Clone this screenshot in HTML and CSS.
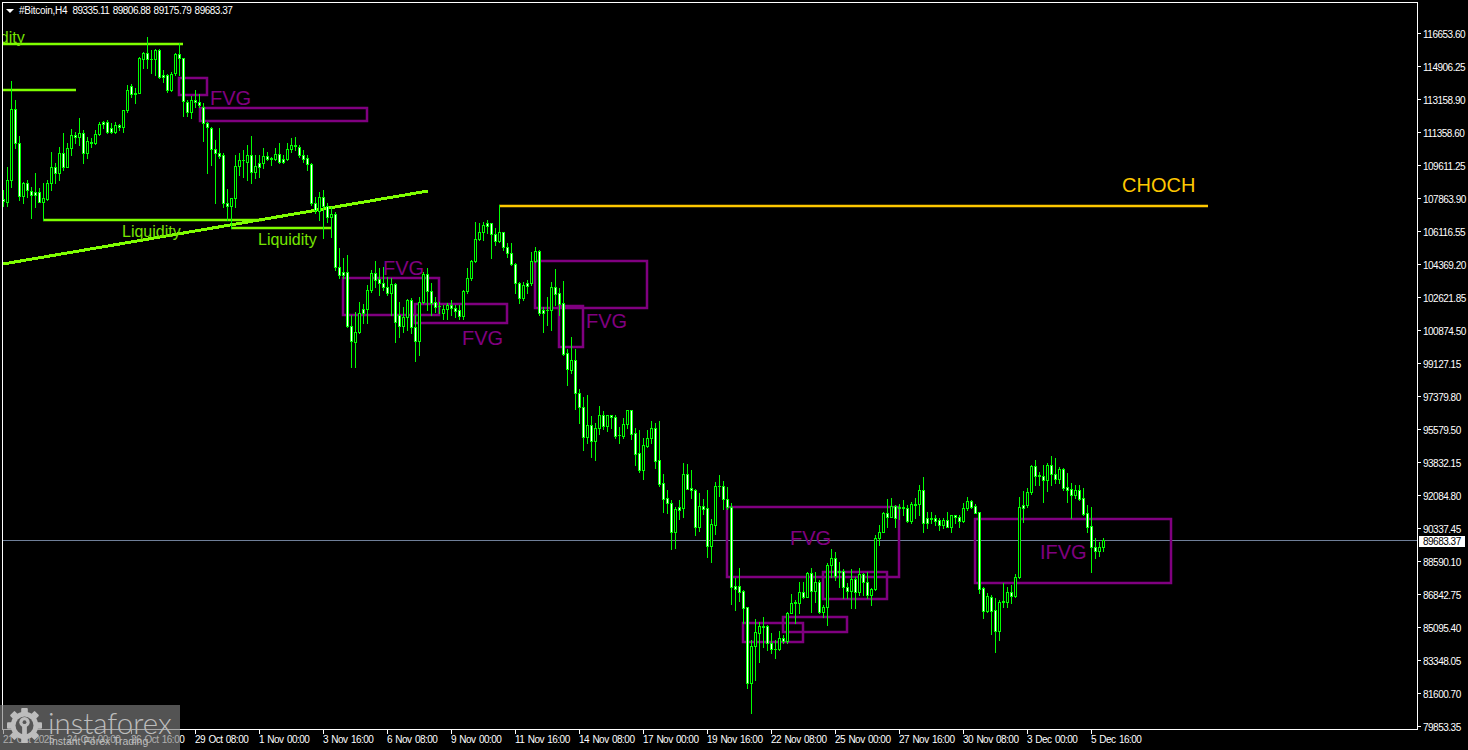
FILE: index.html
```html
<!DOCTYPE html>
<html lang="en">
<head>
<meta charset="utf-8">
<title>#Bitcoin,H4</title>
<link rel="stylesheet" href="styles.css">
</head>
<body>
<main class="terminal">
  <div class="top-row">
    <section class="chart">
      <svg class="plot" id="plot" width="1414" height="726" viewBox="3 3 1414 726" xmlns="http://www.w3.org/2000/svg">
        <g class="objects">
          <line class="price-line" x1="3" y1="540.5" x2="1417" y2="540.5"/>
          <g class="boxes">
            <rect x="179" y="78" width="28" height="17"/>
            <rect x="200" y="108" width="167" height="13"/>
            <rect x="343" y="278" width="96" height="37"/>
            <rect x="415" y="304" width="92" height="19"/>
            <rect x="535" y="261" width="112" height="47"/>
            <rect x="559" y="306" width="24" height="41"/>
            <rect x="727" y="507" width="172" height="70"/>
            <rect x="823" y="572" width="64" height="27"/>
            <rect x="783" y="617" width="64" height="15"/>
            <rect x="743" y="623" width="60" height="19"/>
            <rect x="975" y="519" width="196" height="64"/>
          </g>
          <g class="lime-lines">
            <line x1="3" y1="44" x2="183" y2="44"/>
            <line x1="3" y1="90" x2="76" y2="90"/>
            <line x1="43" y1="220" x2="262" y2="220"/>
            <line x1="231" y1="228" x2="332" y2="228"/>
            <line class="trend" x1="3" y1="264" x2="428" y2="191"/>
          </g>
          <line class="choch-line" x1="499" y1="206" x2="1208" y2="206"/>
        </g>
        <g id="candles"></g>
        <g class="labels">
          <text class="lime" x="-34" y="43">Liquidity</text>
          <text class="lime" x="122" y="237">Liquidity</text>
          <text class="lime" x="258" y="245">Liquidity</text>
          <text class="purple" x="210" y="105">FVG</text>
          <text class="purple" x="383" y="275">FVG</text>
          <text class="purple" x="462" y="345">FVG</text>
          <text class="purple" x="586" y="328">FVG</text>
          <text class="purple" x="790" y="545">FVG</text>
          <text class="purple" x="1040" y="559">IFVG</text>
          <text class="gold" x="1122" y="192">CHOCH</text>
        </g>
      </svg>
      <div class="chart-title">
        <span class="caret"></span>
        <span class="symbol">#Bitcoin,H4</span>
        <span class="ohlc">89335.11 89806.88 89175.79 89683.37</span>
      </div>
    </section>
    <aside class="price-axis">
      <div class="price-row"><i></i><span>116653.60</span></div>
      <div class="price-row"><i></i><span>114906.25</span></div>
      <div class="price-row"><i></i><span>113158.90</span></div>
      <div class="price-row"><i></i><span>111358.60</span></div>
      <div class="price-row"><i></i><span>109611.25</span></div>
      <div class="price-row"><i></i><span>107863.90</span></div>
      <div class="price-row"><i></i><span>106116.55</span></div>
      <div class="price-row"><i></i><span>104369.20</span></div>
      <div class="price-row"><i></i><span>102621.85</span></div>
      <div class="price-row"><i></i><span>100874.50</span></div>
      <div class="price-row"><i></i><span>99127.15</span></div>
      <div class="price-row"><i></i><span>97379.80</span></div>
      <div class="price-row"><i></i><span>95579.50</span></div>
      <div class="price-row"><i></i><span>93832.15</span></div>
      <div class="price-row"><i></i><span>92084.80</span></div>
      <div class="price-row"><i></i><span>90337.45</span></div>
      <div class="price-row"><i></i><span>88590.10</span></div>
      <div class="price-row"><i></i><span>86842.75</span></div>
      <div class="price-row"><i></i><span>85095.40</span></div>
      <div class="price-row"><i></i><span>83348.05</span></div>
      <div class="price-row"><i></i><span>81600.70</span></div>
      <div class="price-row"><i></i><span>79853.35</span></div>
      <div class="last-price">89683.37</div>
    </aside>
  </div>
  <nav class="time-axis">
    <div class="time-cell"><span>21 Oct 2025</span></div>
    <div class="time-cell"><span>24 Oct 00:00</span></div>
    <div class="time-cell"><span>26 Oct 16:00</span></div>
    <div class="time-cell"><span>29 Oct 08:00</span></div>
    <div class="time-cell"><span>1 Nov 00:00</span></div>
    <div class="time-cell"><span>3 Nov 16:00</span></div>
    <div class="time-cell"><span>6 Nov 08:00</span></div>
    <div class="time-cell"><span>9 Nov 00:00</span></div>
    <div class="time-cell"><span>11 Nov 16:00</span></div>
    <div class="time-cell"><span>14 Nov 08:00</span></div>
    <div class="time-cell"><span>17 Nov 00:00</span></div>
    <div class="time-cell"><span>19 Nov 16:00</span></div>
    <div class="time-cell"><span>22 Nov 08:00</span></div>
    <div class="time-cell"><span>25 Nov 00:00</span></div>
    <div class="time-cell"><span>27 Nov 16:00</span></div>
    <div class="time-cell"><span>30 Nov 08:00</span></div>
    <div class="time-cell"><span>3 Dec 00:00</span></div>
    <div class="time-cell"><span>5 Dec 16:00</span></div>
  </nav>
  <div class="watermark">
    <svg class="gear" width="35" height="35" viewBox="0 0 37 37" xmlns="http://www.w3.org/2000/svg">
      <g class="gear-teeth">
        <rect x="15" y="0" width="7" height="37" rx="1"/>
        <rect x="15" y="0" width="7" height="37" rx="1" transform="rotate(45 18.5 18.5)"/>
        <rect x="15" y="0" width="7" height="37" rx="1" transform="rotate(90 18.5 18.5)"/>
        <rect x="15" y="0" width="7" height="37" rx="1" transform="rotate(135 18.5 18.5)"/>
        <circle cx="18.5" cy="18.5" r="14.5"/>
      </g>
      <circle class="gear-hole" cx="18.5" cy="18.5" r="9.5"/>
      <circle class="gear-head" cx="18.5" cy="15" r="5.5"/>
      <circle class="gear-hole" cx="18.5" cy="15" r="2"/>
      <path class="gear-head" d="M16 19h5v15h-5z"/>
    </svg>
    <div class="brand">
      <div class="brand-name">instaforex</div>
      <div class="brand-tag">Instant Forex Trading</div>
    </div>
  </div>
</main>
<script src="chart.js"></script>
</body>
</html>
```
FILE: styles.css
```css
* { box-sizing: border-box; }
html, body { margin: 0; padding: 0; background: #000; }
body { width: 1468px; height: 750px; overflow: hidden; }

.terminal {
  position: relative;
  width: 1468px;
  height: 750px;
  padding: 2px 0 0 2px;
  background: #000;
  color: #fff;
  font-family: "Liberation Sans", Arial, sans-serif;
  font-size: 10px;
  letter-spacing: -0.5px;
}

.top-row { display: flex; height: 728px; }

.chart {
  position: relative;
  flex: 0 0 1416px;
  height: 728px;
  border: 1px solid #fff;
  overflow: hidden;
}
.plot { display: block; }

.chart-title {
  position: absolute;
  left: 3px;
  top: 1px;
  display: flex;
  align-items: center;
  height: 14px;
  white-space: pre;
  line-height: 14px;
  word-spacing: 1px;
}
.caret {
  width: 0;
  height: 0;
  border-left: 4px solid transparent;
  border-right: 4px solid transparent;
  border-top: 4px solid #fff;
  margin-right: 5px;
}
.symbol { margin-right: 5px; letter-spacing: -0.25px; }

.price-line { stroke: #6f7f99; stroke-width: 1; shape-rendering: crispEdges; }
.boxes rect { fill: none; stroke: #800080; stroke-width: 2.5; }
.lime-lines line { stroke: #7fff00; stroke-width: 2.5; }
.lime-lines .trend { stroke-width: 3; shape-rendering: crispEdges; }
.choch-line { stroke: #ffc800; stroke-width: 2.5; }

.labels text { font-family: "Liberation Sans", Arial, sans-serif; letter-spacing: 0; }
.labels .lime { fill: #76e600; font-size: 16px; }
.labels .purple { fill: #800080; font-size: 20px; }
.labels .gold { fill: #ffc800; font-size: 20px; }

.wick { stroke: #00ff00; stroke-width: 1; shape-rendering: crispEdges; }
.body-outline { fill: #00ff00; shape-rendering: crispEdges; }
.body-white { fill: #fff; shape-rendering: crispEdges; }
.body-black { fill: #000; shape-rendering: crispEdges; }

.price-axis {
  position: relative;
  flex: 0 0 50px;
  padding-top: 15px;
}
.price-row {
  display: flex;
  align-items: center;
  height: 33px;
}
.price-row i {
  flex: 0 0 3px;
  height: 1px;
  background: #fff;
  margin-right: 2px;
}
.price-row span { margin-top: 2px; }
.last-price {
  position: absolute;
  left: 1px;
  top: 534px;
  width: 46px;
  height: 11px;
  background: #fff;
  color: #000;
  line-height: 11px;
  padding-left: 4px;
}

.time-axis {
  display: flex;
  padding-left: 1px;
}
.time-cell {
  flex: 0 0 64px;
  position: relative;
  height: 18px;
  padding-top: 4px;
  line-height: 12px;
  white-space: nowrap;
  word-spacing: 1px;
}
.time-cell::before {
  content: "";
  position: absolute;
  left: 0;
  top: 0;
  width: 1px;
  height: 4px;
  background: #fff;
}

.watermark {
  position: absolute;
  left: 0;
  bottom: 0;
  width: 180px;
  height: 45px;
  display: flex;
  align-items: flex-start;
  padding: 3px 0 0 7px;
  background: rgba(128, 128, 128, 0.65);
  letter-spacing: 0;
}
.gear { flex: 0 0 35px; }
.gear-teeth, .gear-head { fill: #bdbdbd; }
.gear-hole { fill: #565656; }
.brand { margin: 1px 0 0 6px; color: #bdbdbd; }
.brand-name {
  font-family: Lato, "Open Sans", sans-serif;
  font-weight: 300;
  font-size: 29.4px;
  line-height: 27px;
  white-space: nowrap;
}
.brand-tag {
  font-family: "Liberation Sans", Arial, sans-serif;
  font-size: 10.5px;
  line-height: 10px;
  margin: 0 0 0 1px;
  white-space: nowrap;
}
```
FILE: chart.js
```js
// Each candle: [high, bodyTop, bodyBottom, low, whiteBody]; pixels on the chart, one every 4px from x=3.
var CANDLES = [
[190,199,201,206,1],[167,180,202,206,0],[81,109,180,187,0],[100,109,143,148,1],[136,143,196,200,1],
[182,183,196,203,0],[180,183,190,197,1],[187,191,195,218,1],[173,192,195,207,1],[188,192,202,202,1],
[183,198,202,220,0],[180,183,199,200,0],[152,167,183,190,0],[163,167,173,183,1],[147,153,173,180,0],
[133,153,167,170,1],[143,148,167,167,0],[129,135,148,155,0],[132,135,137,143,1],[118,133,137,145,0],
[130,133,153,163,1],[137,141,153,158,0],[138,142,143,147,1],[130,134,143,144,0],[122,124,134,135,0],
[121,122,124,128,1],[120,122,132,133,1],[123,128,132,133,1],[122,125,132,133,0],[124,125,127,130,1],
[110,110,127,132,0],[85,90,110,112,0],[84,86,94,97,1],[88,93,94,103,1],[57,58,93,93,0],
[52,53,59,68,0],[37,53,59,68,1],[50,59,59,73,1],[49,50,59,75,0],[49,50,77,78,1],
[70,75,77,82,1],[74,75,90,92,1],[72,74,90,91,0],[53,54,73,75,0],[43,54,58,75,1],
[58,58,101,116,1],[100,102,112,116,1],[96,100,112,118,0],[90,100,102,107,1],[94,102,105,107,1],
[103,107,123,141,1],[122,123,127,173,1],[127,128,149,165,1],[140,149,153,203,1],[128,153,156,158,1],
[153,155,203,207,1],[189,203,206,220,1],[198,198,206,228,0],[155,166,198,207,0],[153,160,166,175,0],
[150,160,160,177,1],[145,155,162,180,0],[136,155,172,183,1],[155,166,172,178,0],[155,163,167,177,1],
[148,156,163,168,0],[152,156,159,160,1],[157,158,159,165,1],[148,154,159,160,0],[143,154,162,163,1],
[155,159,162,163,1],[143,149,159,160,0],[138,145,149,152,0],[137,145,146,150,1],[145,147,155,157,1],
[150,155,159,162,1],[155,158,164,170,1],[163,164,203,205,1],[197,203,210,213,1],[192,197,211,220,0],
[190,197,206,238,1],[203,206,217,222,1],[207,214,217,237,0],[212,214,267,270,1],[248,267,275,278,1],
[258,272,275,278,1],[255,272,326,327,1],[315,326,341,367,1],[312,332,342,367,0],[302,313,332,333,0],
[304,309,313,323,1],[285,290,309,323,0],[270,273,290,292,0],[261,273,280,287,1],[268,279,283,295,1],
[267,283,287,290,1],[277,287,293,295,1],[278,284,293,315,0],[283,284,322,342,1],[302,315,326,337,1],
[307,317,326,332,0],[299,300,317,330,0],[298,300,327,333,1],[315,327,341,361,1],[297,302,341,355,0],
[272,274,302,303,0],[268,274,291,310,1],[283,291,303,315,1],[297,302,307,312,1],[302,306,306,313,1],
[305,309,313,319,0],[303,305,309,319,0],[300,305,308,315,1],[305,308,311,317,1],[305,310,316,319,1],
[290,291,316,319,0],[268,278,291,293,0],[260,261,278,280,0],[222,239,261,262,0],[223,232,239,240,0],
[222,225,232,240,0],[220,223,226,233,1],[223,223,234,258,1],[228,234,241,245,1],[205,232,241,242,0],
[232,232,247,250,1],[243,247,253,257,1],[243,253,264,265,1],[263,264,283,293,1],[282,283,298,303,1],
[282,285,298,300,0],[280,283,286,293,1],[252,261,283,285,0],[247,251,261,262,0],[250,251,313,315,1],
[307,310,313,332,1],[297,310,310,325,1],[282,287,310,330,0],[269,287,294,305,1],[288,293,304,315,1],
[281,303,354,355,1],[349,353,369,385,1],[337,360,370,373,0],[349,360,393,409,1],[389,393,407,423,1],
[397,407,437,450,1],[395,425,437,443,0],[416,425,441,457,1],[423,428,441,460,0],[406,415,428,434,0],
[411,415,426,429,1],[415,415,426,431,0],[415,415,417,428,1],[415,417,436,438,1],[427,435,435,443,1],
[418,424,436,438,0],[410,410,424,428,0],[410,410,434,439,1],[428,433,454,465,1],[430,453,470,472,1],
[438,445,470,479,0],[430,438,446,447,0],[421,428,438,443,0],[423,428,461,468,1],[421,460,484,486,1],
[474,483,499,512,1],[490,498,503,513,1],[500,503,532,549,1],[507,509,532,548,0],[500,507,510,519,1],
[463,474,508,517,0],[464,474,489,489,1],[470,488,490,498,1],[489,490,527,535,1],[493,506,527,531,0],
[499,506,509,514,1],[490,508,546,557,1],[519,524,546,562,0],[482,486,525,534,0],[475,486,486,496,1],
[481,486,499,509,1],[487,499,507,509,1],[503,507,587,604,1],[578,586,589,610,1],[568,586,592,601,1],
[590,591,608,623,1],[607,607,683,688,1],[640,646,683,713,0],[619,632,646,680,0],[622,626,633,662,0],
[617,626,627,647,1],[625,626,643,650,1],[633,643,649,653,1],[640,649,649,658,1],[631,638,649,650,0],
[635,638,641,643,1],[612,613,641,643,0],[594,603,613,613,0],[600,602,603,623,1],[582,592,603,613,0],
[582,592,597,598,1],[572,573,597,597,0],[568,573,591,612,1],[572,582,591,602,0],[580,582,612,613,1],
[605,607,612,617,0],[563,565,607,625,0],[549,558,565,577,0],[552,558,576,580,1],[562,571,572,587,1],
[569,571,587,598,1],[583,587,591,598,1],[569,579,591,608,0],[577,579,592,608,1],[568,574,592,595,0],
[573,574,582,595,1],[572,582,595,598,1],[588,589,595,605,0],[535,538,589,590,0],[525,532,538,545,0],
[512,513,532,532,0],[499,513,517,527,1],[498,506,517,517,0],[505,506,518,527,1],[504,507,508,519,1],
[500,507,508,515,1],[505,508,521,522,1],[502,504,521,523,0],[498,504,505,518,1],[485,490,504,515,0],
[477,490,523,532,1],[512,518,523,528,1],[512,518,519,523,1],[515,518,521,525,1],[518,520,525,530,1],
[518,520,525,528,0],[512,520,527,527,1],[515,515,527,532,0],[515,515,517,523,1],[515,517,521,527,1],
[503,508,521,522,0],[497,501,508,510,0],[500,501,507,508,1],[504,506,513,513,1],[512,512,589,593,1],
[587,588,611,618,1],[593,596,611,612,0],[595,597,611,634,1],[598,610,631,652,1],[600,602,631,640,0],
[583,601,602,607,1],[587,592,602,607,0],[585,592,596,603,1],[574,577,596,597,0],[497,507,577,578,0],
[491,505,508,522,1],[488,492,505,507,0],[465,466,492,494,0],[460,466,476,485,1],[472,475,476,485,1],
[465,476,480,502,1],[463,465,480,491,0],[456,465,474,485,1],[458,474,479,483,1],[467,469,479,483,0],
[468,469,488,490,1],[473,487,490,502,1],[483,489,495,518,1],[485,490,495,498,0],[485,490,499,500,1],
[488,498,514,515,1],[505,513,527,532,1],[507,526,547,572,1],[538,547,551,558,1],[542,547,551,556,0],
[538,540,547,551,0]
];

(function () {
  var NS = "http://www.w3.org/2000/svg";
  var layer = document.getElementById("candles");
  function add(tag, cls, attrs) {
    var el = document.createElementNS(NS, tag);
    el.setAttribute("class", cls);
    for (var k in attrs) el.setAttribute(k, attrs[k]);
    layer.appendChild(el);
  }
  CANDLES.forEach(function (c, i) {
    var x = 3 + 4 * i;
    add("line", "wick", { x1: x + 0.5, x2: x + 0.5, y1: c[0], y2: c[3] + 1 });
    var h = c[2] - c[1] + 1;
    add("rect", "body-outline", { x: x - 1, y: c[1], width: 3, height: h });
    if (h > 2) {
      add("rect", c[4] ? "body-white" : "body-black", { x: x, y: c[1] + 1, width: 1, height: h - 2 });
    }
  });
})();
```
